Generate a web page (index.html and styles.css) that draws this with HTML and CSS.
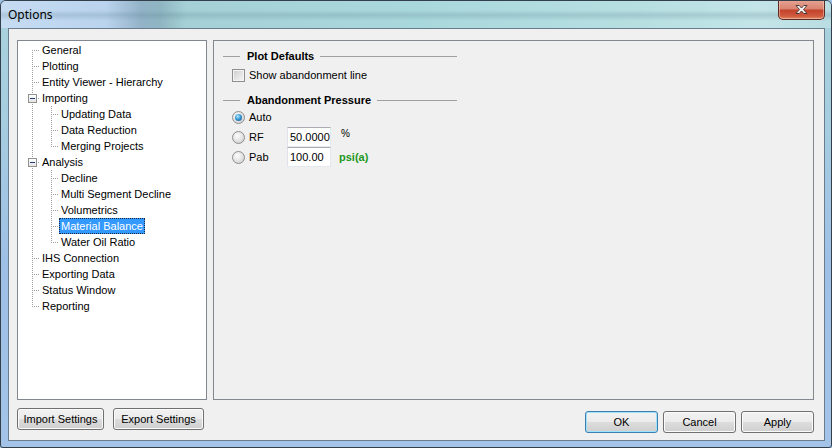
FILE: index.html
```html
<!DOCTYPE html>
<html lang="en">
<head>
  <meta charset="UTF-8" />
  <title>Options</title>
  <link rel="stylesheet" href="styles.css">
</head>
<body>
  <div class="window">
    <div class="titlebar">
      <span class="title">Options</span>
      <button class="close-button" title="Close">
        <svg width="17" height="11" viewBox="0 0 17 11">
          <path d="M3 1.5h3.2l2.3 2.6 2.3-2.6H14L10.4 5.5 14 9.5h-3.2L8.5 6.9 6.2 9.5H3l3.6-4z" fill="#fff" stroke="#4a3a3a" stroke-width="1" stroke-linejoin="round"/>
        </svg>
      </button>
    </div>

    <div class="client">
      <div class="main">
        <!-- tree of option pages -->
        <div class="tree">
          <div class="row"><span class="cell first"></span><span class="label">General</span></div>
          <div class="row"><span class="cell"></span><span class="label">Plotting</span></div>
          <div class="row"><span class="cell"></span><span class="label">Entity Viewer - Hierarchy</span></div>
          <div class="row"><span class="cell"><span class="expander"><i></i></span></span><span class="label">Importing</span></div>
          <div class="row"><span class="indent"></span><span class="cell"></span><span class="label">Updating Data</span></div>
          <div class="row"><span class="indent"></span><span class="cell"></span><span class="label">Data Reduction</span></div>
          <div class="row"><span class="indent"></span><span class="cell last"></span><span class="label">Merging Projects</span></div>
          <div class="row"><span class="cell"><span class="expander"><i></i></span></span><span class="label">Analysis</span></div>
          <div class="row"><span class="indent"></span><span class="cell"></span><span class="label">Decline</span></div>
          <div class="row"><span class="indent"></span><span class="cell"></span><span class="label">Multi Segment Decline</span></div>
          <div class="row"><span class="indent"></span><span class="cell"></span><span class="label">Volumetrics</span></div>
          <div class="row"><span class="indent"></span><span class="cell"></span><span class="label selected">Material Balance</span></div>
          <div class="row"><span class="indent"></span><span class="cell last"></span><span class="label">Water Oil Ratio</span></div>
          <div class="row"><span class="cell"></span><span class="label">IHS Connection</span></div>
          <div class="row"><span class="cell"></span><span class="label">Exporting Data</span></div>
          <div class="row"><span class="cell"></span><span class="label">Status Window</span></div>
          <div class="row"><span class="cell last"></span><span class="label">Reporting</span></div>
        </div>

        <!-- Material Balance page -->
        <div class="panel">
          <div class="group-title">Plot Defaults</div>
          <div class="options">
            <div class="opt-row check-row">
              <span class="checkbox"></span>
              <span class="opt-text">Show abandonment line</span>
            </div>
          </div>

          <div class="group-title second">Abandonment Pressure</div>
          <div class="options">
            <div class="opt-row">
              <span class="radio checked"></span>
              <span class="opt-text radio-text">Auto</span>
            </div>
            <div class="opt-row">
              <span class="radio"></span>
              <span class="opt-text radio-text">RF</span>
              <input class="field" type="text" value="50.0000">
              <span class="unit percent">%</span>
            </div>
            <div class="opt-row">
              <span class="radio"></span>
              <span class="opt-text radio-text">Pab</span>
              <input class="field" type="text" value="100.00">
              <span class="unit psi">psi(a)</span>
            </div>
          </div>
        </div>
      </div>

      <div class="footer">
        <div class="left-buttons">
          <button class="btn import">Import Settings</button>
          <button class="btn export">Export Settings</button>
        </div>
        <div class="right-buttons">
          <button class="btn default">OK</button>
          <button class="btn">Cancel</button>
          <button class="btn">Apply</button>
        </div>
      </div>
    </div>
  </div>
</body>
</html>
```

FILE: styles.css
```css
body { margin: 0; background: #9fbfe4; font-family: "Liberation Sans", Arial, sans-serif; font-size: 11px; color: #000; }

.window {
  width: 832px; height: 448px; box-sizing: border-box;
  display: flex; flex-direction: column;
  border: 1px solid #33404c; border-radius: 6px 6px 3px 3px;
  background: linear-gradient(to bottom, #a9d3dc 0, #a6cde0 120px, #9fc0e6 260px, #a3c3e8 100%);
  overflow: hidden;
}

/* title bar */
.titlebar {
  height: 27px; display: flex; align-items: flex-start; flex-shrink: 0;
  background:
    linear-gradient(to bottom, rgba(255,255,255,0) 9px, rgba(80,120,135,.22) 14px, rgba(255,255,255,0) 20px),
    linear-gradient(to right, #c6dcf3 0, #bad3ee 105px, #93b3c8 140px, #8fb6c2 160px, #a5d1d6 185px, #a9d8dc 420px, #b7dfe2 640px, #c3e5e8 760px, #b9dde2 100%);
}
.title { font-family: "Noto Sans", "Open Sans", sans-serif; font-size: 12px; margin: 5px 0 0 7px; color: #000; }
.close-button {
  margin: -1px 6px 0 auto; width: 47px; height: 20px; padding: 0;
  border: 1px solid #5b2a22; border-top: none; border-radius: 0 0 5px 5px;
  background: linear-gradient(to bottom, #e7a595 0, #d98470 45%, #c4432c 55%, #cf5b3f 85%, #e48a62 100%);
  box-shadow: inset 0 0 0 1px rgba(255,220,210,.45);
  display: flex; align-items: center; justify-content: center;
}

/* client area */
.client {
  flex: 1; margin: 0 6px 6px 7px;
  border: 1px solid #6b7c8c; background: #f0f0f0;
  display: flex; flex-direction: column;
}
.main { display: flex; gap: 6px; padding: 11px 10px 0 8px; }

/* tree */
.tree {
  width: 190px; height: 360px; box-sizing: border-box;
  border: 1px solid #828790; background: #fff; padding-top: 1px;
}
.row { display: flex; height: 16px; }
.cell, .indent {
  box-sizing: border-box; padding-left: 14px; height: 16px; flex-shrink: 0;
  background-origin: content-box; background-clip: content-box; background-repeat: no-repeat;
}
.indent {
  width: 19px;
  background-image: repeating-linear-gradient(to bottom, #a0a0a0 0 1px, transparent 1px 2px);
  background-size: 1px 16px;
}
.cell {
  width: 22px;
  background-image:
    repeating-linear-gradient(to right, #a0a0a0 0 1px, transparent 1px 2px),
    repeating-linear-gradient(to bottom, #a0a0a0 0 1px, transparent 1px 2px);
  background-size: 8px 1px, 1px 16px;
  background-position: 0 8px, 0 0;
}
.cell.first { background-size: 8px 1px, 1px 8px; background-position: 0 8px, 0 8px; }
.cell.last { background-size: 8px 1px, 1px 9px; background-position: 0 8px, 0 0; }
.expander {
  display: flex; align-items: center; justify-content: center;
  width: 9px; height: 9px; box-sizing: border-box; margin: 4px 0 0 -4px;
  border: 1px solid #919191; background: linear-gradient(to bottom, #fff, #e4e4e4);
}
.expander i { width: 5px; height: 1px; background: #1e3a6e; }
.label { padding: 0 2px; line-height: 16px; white-space: nowrap; }
.label.selected { background: #3399ff; color: #fff; outline: 1px dotted #1a2a44; outline-offset: -1px; }

/* option page */
.panel { flex: 1; height: 360px; box-sizing: border-box; border: 1px solid #828790; padding: 8px 0 0 9px; }
.group-title { display: flex; align-items: center; gap: 7px; width: 234px; height: 14px; font-weight: bold; white-space: nowrap; }
.group-title::before { content: ""; width: 17px; height: 1px; background: #a0a0a0; }
.group-title::after { content: ""; flex: 1; height: 1px; background: #a0a0a0; margin-left: -1px; }
.group-title.second { margin-top: 8px; }
.options { padding-left: 9px; }
.opt-row { display: flex; align-items: center; height: 20px; }
.check-row { margin-top: 2px; }
.checkbox {
  width: 13px; height: 13px; box-sizing: border-box; border: 1px solid #8e8f8f;
  background: linear-gradient(135deg, #cdcdcd, #f7f7f7);
  box-shadow: inset 0 0 0 1px #f4f4f4;
}
.opt-text { margin-left: 4px; }
.radio {
  width: 13px; height: 13px; box-sizing: border-box; border-radius: 50%;
  border: 1px solid #8e8f8f;
  background: radial-gradient(circle at 40% 35%, #ffffff 0, #e6e6e6 45%, #c8c8c8 100%);
  display: flex; align-items: center; justify-content: center;
}
.radio.checked::after {
  content: ""; width: 7px; height: 7px; border-radius: 50%;
  background: radial-gradient(circle at 40% 35%, #b4ecff 0, #3a9ad6 45%, #12497e 100%);
}
.radio-text { width: 38px; }
.field {
  width: 44px; height: 20px; box-sizing: border-box; margin: 0; padding: 0 0 0 2px;
  border: 1px solid #e3e9ef; border-top-color: #abadb3; border-left-color: #e2e3ea;
  background: #fff; font: 11px "Liberation Sans", Arial, sans-serif; color: #000;
}
.unit { margin-left: 8px; }
.percent { margin-left: 10px; margin-bottom: 8px; font-size: 10px; }
.psi { color: #1c981c; font-weight: bold; }

/* bottom buttons */
.footer { display: flex; padding: 0 10px 0 8px; }
.left-buttons { display: flex; gap: 9px; margin-top: 8px; }
.right-buttons { display: flex; gap: 5px; margin: 11px 0 0 auto; }
.btn {
  height: 22px; box-sizing: border-box; padding: 0; margin: 0;
  border: 1px solid #707070; border-radius: 3px;
  background: linear-gradient(to bottom, #f2f2f2 0, #ebebeb 50%, #dddddd 50%, #cfcfcf 100%);
  box-shadow: inset 0 0 0 1px #fbfbfb;
  font: 11px "Liberation Sans", Arial, sans-serif; color: #000;
  width: 73px;
}
.btn.import { width: 87px; }
.btn.export { width: 91px; }
.btn.default { border-color: #3c7fb1; box-shadow: inset 0 0 0 1px #9fe2fb; }
```
